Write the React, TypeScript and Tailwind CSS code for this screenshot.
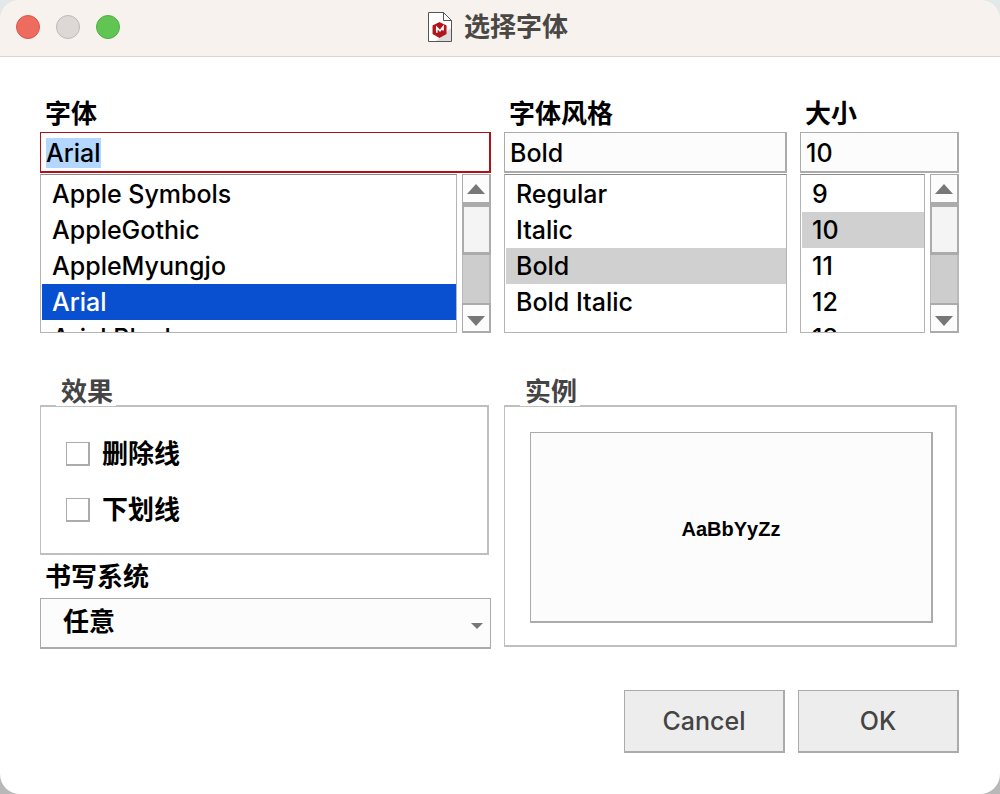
import { useEffect, useRef, useState } from 'react';

const FAMILIES = ['Apple Symbols', 'AppleGothic', 'AppleMyungjo', 'Arial', 'Arial Black'];
const STYLES = ['Regular', 'Italic', 'Bold', 'Bold Italic'];
const SIZES = ['9', '10', '11', '12', '13'];

const EDGE = 'border border-r-2 border-b-2 border-[#ababab]';
const LABEL = 'text-[26px] font-bold';

function Triangle({ className, down }: { className: string; down?: boolean }) {
  return (
    <svg className={className} viewBox="0 0 18 10" preserveAspectRatio="none" fill="#777777" aria-hidden="true">
      <path d={down ? 'M0 0h18L9 10z' : 'M0 10h18L9 0z'} />
    </svg>
  );
}

function DocIcon() {
  return (
    <svg className="h-[30px] w-6" viewBox="0 0 24 30" aria-hidden="true">
      <path d="M.5.5h15l8 8v21H.5z" fill="#fff" stroke="#555" />
      <path d="M23 16v13H8z" fill="#dcdcdc" />
      <path d="M15.5.5v8h8z" fill="#fafafa" stroke="#555" />
      <path
        d="M11.500 10.800l6.300 3.200v7.600l-6.300 3.600-6.200-3.600V14z"
        fill="#b3141b"
        stroke="#b3141b"
        strokeWidth="1.500"
        strokeLinejoin="round"
      />
      <path d="M8.800 20.800v-5.300l3.200 3.300 3-3.800v3.600" fill="none" stroke="#fff" strokeWidth="1.700" />
    </svg>
  );
}

function ScrollBar() {
  return (
    <div className="flex w-[29px] shrink-0 flex-col bg-[#cdcdcd]" aria-hidden="true">
      <div className={`flex h-[30px] items-center justify-center bg-[#fcfcfc] ${EDGE}`}>
        <Triangle className="h-2.5 w-[18px]" />
      </div>
      <div className="h-[51px] border-2 border-t-3 border-b-3 border-[#ababab] bg-[#f4f4f4]" />
      <div className="flex-1 border-r-2 border-l border-[#bababa]" />
      <div className={`flex h-[30px] items-end justify-center border-t-2 bg-[#fcfcfc] pb-[5px] ${EDGE}`}>
        <Triangle className="h-2.5 w-[18px]" down />
      </div>
    </div>
  );
}

type ListFieldProps = {
  id: string;
  label: string;
  items: string[];
  value: string;
  onChange: (value: string) => void;
  focused?: boolean;
  scrollable?: boolean;
};

function ListField({ id, label, items, value, onChange, focused, scrollable }: ListFieldProps) {
  const inputRef = useRef<HTMLInputElement>(null);

  useEffect(() => {
    if (focused) {
      inputRef.current?.focus();
      inputRef.current?.select();
    }
  }, [focused]);

  return (
    <div className="min-w-0">
      <label htmlFor={id} className={`block pl-[5px] leading-9 ${LABEL}`}>
        {label}
      </label>
      <input
        ref={inputRef}
        id={id}
        type="text"
        value={value}
        onChange={(e) => onChange(e.target.value)}
        className="block h-[41px] w-full border border-r-2 border-b-2 border-[#ababab] bg-[#fcfcfc] px-[5px] pt-0.5 font-medium outline-none selection:bg-[#b3d7ff] selection:text-black focus:border-[#b01116] focus:bg-white"
      />
      <div className="mt-px flex h-[159px] gap-[5px]">
        <ul
          role="listbox"
          aria-label={label}
          className="min-w-0 flex-1 overflow-hidden border border-[#b4b4b4] border-t-[#8c8c8c] pt-px pl-px"
        >
          {items.map((item) => (
            <li
              key={item}
              role="option"
              aria-selected={item === value}
              onClick={() => onChange(item)}
              className={`h-9 pl-2.5 leading-9 whitespace-nowrap ${
                item !== value ? '' : focused ? 'bg-[#0850d0] text-white' : 'bg-[#d0d0d0]'
              }`}
            >
              {item}
            </li>
          ))}
        </ul>
        {scrollable && <ScrollBar />}
      </div>
    </div>
  );
}

function CheckRow({ label }: { label: string }) {
  return (
    <label className={`flex items-center gap-3 leading-7 ${LABEL}`}>
      <input type="checkbox" className={`h-6 w-6 appearance-none bg-white checked:bg-[#b01116] ${EDGE}`} />
      {label}
    </label>
  );
}

const LEGEND = `relative float-left ml-4 -mb-px self-start bg-white pt-px pr-[3px] pl-[5px] leading-7 text-[#444444] ${LABEL}`;
const GROUP = 'border border-t-2 border-r-2 border-b-2 border-[#bfbfbf]';
const BUTTON = 'h-[63px] w-[161px] bg-[#ededed] pt-0.5 font-medium text-[#444444]';

export default function App() {
  const [family, setFamily] = useState('Arial');
  const [style, setStyle] = useState('Bold');
  const [size, setSize] = useState('10');

  return (
    <div className="min-h-screen bg-linear-to-b from-[#e4e8e8] to-[#b8b8b8] font-['Inter','Noto_Sans_CJK_SC',sans-serif] text-[25px] font-medium text-black">
      <div className="flex min-h-screen flex-col overflow-hidden rounded-[20px] bg-white">
        <header className="relative flex h-[57px] items-center justify-center gap-3 border-b border-[#d8d5d3] bg-[#f7f2ee] pr-1 pb-0.5">
          <div className="absolute left-4 flex gap-4">
            <button type="button" aria-label="关闭" className="h-6 w-6 rounded-full border border-[#d9574c] bg-[#ed6b5f]" />
            <button type="button" aria-label="最小化" className="h-6 w-6 rounded-full border border-[#bdb8b5] bg-[#ddd8d5]" />
            <button type="button" aria-label="缩放" className="h-6 w-6 rounded-full border border-[#4fae43] bg-[#61c554]" />
          </div>
          <DocIcon />
          <h1 className={`leading-9 text-[#4a4745] ${LABEL}`}>选择字体</h1>
        </header>

        <main className="pt-[39px] pr-[41px] pb-10 pl-10">
          <div className="grid grid-cols-[451fr_283fr_159fr] gap-[13px]">
            <ListField id="family" label="字体" items={FAMILIES} value={family} onChange={setFamily} focused scrollable />
            <ListField id="style" label="字体风格" items={STYLES} value={style} onChange={setStyle} />
            <ListField id="size" label="大小" items={SIZES} value={size} onChange={setSize} scrollable />
          </div>

          <div className="mt-11 grid grid-cols-[451fr_455fr] gap-[13px]">
            <div>
              <fieldset className="mr-0.5 flex flex-col">
                <legend className={LEGEND}>效果</legend>
                <div className={`flex h-[150px] flex-col justify-center gap-7 pt-1 pl-[25px] ${GROUP}`}>
                  <CheckRow label="删除线" />
                  <CheckRow label="下划线" />
                </div>
              </fieldset>
              <label htmlFor="script" className={`block pl-[5px] leading-[43px] ${LABEL}`}>
                书写系统
              </label>
              <div className="relative">
                <select
                  id="script"
                  className={`block h-[51px] w-full appearance-none border border-b-2 border-[#ababab] bg-[#fcfcfc] pb-1 pl-[22px] outline-none ${LABEL}`}
                >
                  <option>任意</option>
                </select>
                <Triangle className="pointer-events-none absolute right-2 bottom-5 h-1.5 w-3" down />
              </div>
            </div>

            <fieldset className="mr-0.5 flex flex-col">
              <legend className={LEGEND}>实例</legend>
              <div className={`flex h-[242px] pt-[25px] pr-[22px] pb-[22px] pl-[25px] ${GROUP}`}>
                <div
                  className={`flex flex-1 items-center justify-center bg-[#fcfcfc] pt-1 font-['Liberation_Sans',Arial,sans-serif] text-xl font-bold ${EDGE}`}
                >
                  AaBbYyZz
                </div>
              </div>
            </fieldset>
          </div>

          <div className="mt-[41px] flex justify-end gap-[13px]">
            <button type="button" className={`${BUTTON} ${EDGE}`}>
              Cancel
            </button>
            <button type="button" className={`${BUTTON} ${EDGE}`}>
              OK
            </button>
          </div>
        </main>
      </div>
    </div>
  );
}
